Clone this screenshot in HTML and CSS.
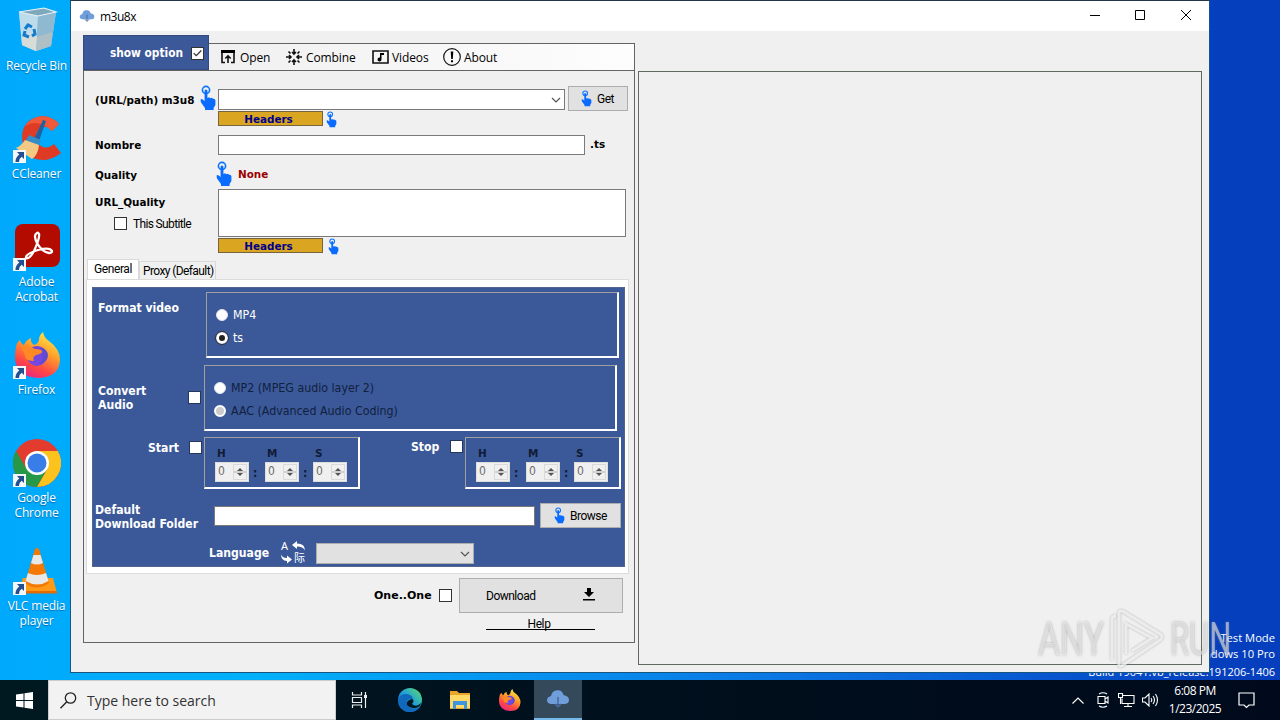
FILE: index.html
```
<!DOCTYPE html>
<html lang="en">
<head>
  <meta charset="UTF-8">
  <meta name="viewport" content="width=device-width, initial-scale=1.0">
  <title>m3u8x</title>
  <link rel="stylesheet" href="styles.css">
</head>
<body>
  <svg class="defs">
    <linearGradient id="fire" x1="0.8" y1="0" x2="0.3" y2="1">
      <stop offset="0" stop-color="#fff04a"/><stop offset="0.4" stop-color="#ffa02b"/><stop offset="0.75" stop-color="#ff4545"/><stop offset="1" stop-color="#e52786"/>
    </linearGradient>
    <linearGradient id="sea" x1="0" y1="1" x2="1" y2="0">
      <stop offset="0" stop-color="#0b61b8"/><stop offset="0.5" stop-color="#1e9fdb"/><stop offset="1" stop-color="#61de62"/>
    </linearGradient>
    <symbol id="hand" viewBox="0 0 16 26">
      <circle cx="6" cy="5" r="3.6" fill="none" stroke="#0a74ff" stroke-width="1.6"/>
      <path d="M4.6 5.5q1.4-2 2.8 0V13l1.6-.7 1.4 1 1.5-.5 1.2 1 1.6.2.7 1.2V20l-1.8 3v2H5v-2L1 17.5.5 14.5 2 14l2.6 2z" fill="#0a6cff"/>
    </symbol>
    <symbol id="cloud" viewBox="0 0 24 20">
      <path d="M5 15Q1 14.500 1 11 1 8 5 7 6 2 10 1.500 16 0 17.500 6 23 7 23 11 23 15 18 15z" fill="#6f9edb"/>
      <path d="M12 8v9M9 15l3 3 3-3" fill="none" stroke="#47699c" stroke-width="1.500"/>
    </symbol>
    <symbol id="firefox" viewBox="0 0 48 48">
      <path d="M3 17Q3 12 7 9q1 4 4 5 2-5 7-7-1 4 3 7 4-1 5-5 0-5 4-8 1 6 6 9 11 8 11 19-1 17-21 18Q3 46 2 27 2 20 3 17z" fill="url(#fire)"/>
      <circle cx="24" cy="25" r="10" fill="#7447df"/>
      <path d="M8 17q7-4 14 1 5 0 8 2-2 3-7 4-4 2-2 6-5 0-8-2-1-6-5-11z" fill="#ff8a25"/>
      <path d="M27 16q8 2 8 9-1 6-8 8 6-7 0-17z" fill="#5d4bd1"/>
    </symbol>
    <symbol id="shortcut" viewBox="0 0 13 13">
      <path d="M0 0h13v13H0z" fill="#f4f8fb"/>
      <path d="M4 2h7v7L8.700 6.800Q6 8.500 6 12H2.500Q2.500 7 6.300 4.500z" fill="#234f8f"/>
    </symbol>
    <symbol id="chev" viewBox="0 0 10 6"><path d="M1 1l4 4 4-4" fill="none" stroke="#555" stroke-width="1.200"/></symbol>
  </svg>

  <div class="desktop">
    <div class="shortcuts">
      <div class="shortcut">
        <svg class="pic" viewBox="0 0 48 48">
          <path d="M6 5l25-4 12 4-5 34-15 5-14-6z" fill="#a9cfe4"/>
          <path d="M6 5l19 4-2 35-14-6z" fill="#bcdcec"/><path d="M25 9l18-4-5 34-15 5z" fill="#8fb9d1"/>
          <path d="M9 29l7-3 8 4-1 14-14-6z" fill="#d8dcd9"/><path d="M24 30l15-5-1 14-15 5z" fill="#aebfc6"/>
          <path d="M6 5l25-4 12 4-18 4z" fill="#7fa9bb" stroke="#e5f2f7" stroke-width="1.200"/>
          <path d="M12 22l3-4 4 2M21 22l1 5-3 2M16 30l-5-2 1-4" fill="none" stroke="#147bcd" stroke-width="3"/>
        </svg>
        <span>Recycle Bin</span>
      </div>
      <div class="shortcut">
        <svg class="pic" viewBox="0 0 48 48">
          <path d="M46 9Q37-1 24 2 10 6 9 21q0 15 11 22 14 6 28-5l-7-9q-7 6-13 2-6-4-5-11 2-9 11-8 3 1 5 4z" fill="#df3a24"/>
          <path d="M46 9Q37-1 24 2q-8 3-12 9 12-8 27 5z" fill="#f05a3a"/>
          <path d="M30 5l3 1-7 20-5-2z" fill="#245f9e"/><path d="M16 20l12 5-2 6-14-4z" fill="#348cc9"/>
          <path d="M12 25l14 5q-1 10-7 14L3 33q6-3 9-8z" fill="#f3c983"/>
        </svg>
        <svg class="arrow"><use href="#shortcut"/></svg>
        <span>CCleaner</span>
      </div>
      <div class="shortcut">
        <svg class="pic" viewBox="0 0 48 48">
          <rect x="2" y="1" width="45" height="43" rx="8" fill="#b30b00"/>
          <path d="M24 10q-4 2 0 10 5 9 12 10 3 0 3-2-2-4-14-1-13 4-12 8 3 2 8-7 6-13 5-17-1-2-2-1z" fill="none" stroke="#fff" stroke-width="2.300"/>
        </svg>
        <svg class="arrow"><use href="#shortcut"/></svg>
        <span>Adobe<br>Acrobat</span>
      </div>
      <div class="shortcut">
        <svg class="pic"><use href="#firefox"/></svg>
        <svg class="arrow"><use href="#shortcut"/></svg>
        <span>Firefox</span>
      </div>
      <div class="shortcut">
        <svg class="pic" viewBox="0 0 48 48">
          <circle cx="24" cy="24" r="24" fill="#e33b2e"/>
          <path d="M3.200 12A24 24 0 0 0 24 48l10.500-18L24 24 13.600 30z" fill="#279847"/>
          <path d="M44.800 12A24 24 0 0 1 24 48l10.400-18L24 12z" fill="#fcc31e"/>
          <circle cx="24" cy="24" r="12" fill="#fff"/><circle cx="24" cy="24" r="9.500" fill="#397ee8"/>
        </svg>
        <svg class="arrow"><use href="#shortcut"/></svg>
        <span>Google<br>Chrome</span>
      </div>
      <div class="shortcut">
        <svg class="pic" viewBox="0 0 48 48">
          <path d="M10 31h30l4 15H5z" fill="#ff9a16"/><path d="M5 44h39v2.500H5z" fill="#e56b00"/>
          <path d="M22 2q2-2 4 0l10 34q-12 9-24 0z" fill="#f57900"/>
          <path d="M20.500 8h7l2.500 8q-6 3-12 0zM15 26q9 4 18 0l2.500 8q-11 7-23 0z" fill="#e8e8e8"/>
        </svg>
        <svg class="arrow"><use href="#shortcut"/></svg>
        <span>VLC media<br>player</span>
      </div>
    </div>

    <div class="build-info">Test Mode<br>Windows 10 Pro<div class="build-no">Build 19041.vb_release.191206-1406</div></div>

    <div class="window">
      <div class="titlebar">
        <svg class="app-icon"><use href="#cloud"/></svg>
        <span class="app-name">m3u8x</span>
        <svg class="controls" viewBox="0 0 104 12">
          <path d="M1 6.500h10M46.500 1.500h9v9h-9zM92 1l10 10M102 1L92 11" fill="none" stroke="#000"/>
        </svg>
      </div>

      <div class="client">
        <div class="left">
          <div class="header">
            <div class="show-option"><span class="lbl">show option</span>
              <svg class="check" viewBox="0 0 13 13"><path d="M2 6l3 3 6-6" fill="none" stroke="#333" stroke-width="1.500"/></svg>
            </div>
            <div class="menu">
              <svg class="mi-open" viewBox="0 0 14 14"><path d="M4 12.500H1V1h12v11.500h-3M7 13V6M4.300 8.500L7 5.800l2.700 2.700" fill="none" stroke="#111" stroke-width="1.600"/><path d="M0 0h14v3H0z"/></svg>
              <span class="m-open">Open</span>
              <svg class="mi-combine" viewBox="0 0 16 16"><path d="M8 0v5M6 3l2 2 2-2M8 16v-5M6 13l2-2 2 2M0 8h5M3 6l2 2-2 2M16 8h-5M13 6l-2 2 2 2M2.500 2.500L4.500 4.500M13.500 2.500l-2 2M2.500 13.500l2-2M13.500 13.500l-2-2" fill="none" stroke="#111" stroke-width="1.600"/></svg>
              <span class="m-combine">Combine</span>
              <svg class="mi-videos" viewBox="0 0 17 14"><path d="M1 1h15v12H1z" fill="none" stroke="#111" stroke-width="1.600"/><path d="M8 3h4v2H9.500v4.500a2 2 0 1 1-1.500-2z"/></svg>
              <span class="m-videos">Videos</span>
              <svg class="mi-about" viewBox="0 0 18 18"><circle cx="9" cy="9" r="8.300" fill="none" stroke="#111" stroke-width="1.200"/><path d="M7.700 3.500h2.600L9.800 11H8.200zM8 12.300h2v2H8z"/></svg>
              <span class="m-about">About</span>
            </div>
          </div>

          <div class="panel">
            <div class="row row-url">
              <span class="bold label w-url">(URL/path) m3u8</span>
              <svg class="hand"><use href="#hand"/></svg>
              <div class="combo"><svg class="chev"><use href="#chev"/></svg></div>
              <div class="button get"><svg class="hand-sm"><use href="#hand"/></svg><span>Get</span></div>
            </div>
            <div class="row row-headers"><div class="headers bold">Headers</div><svg class="hand-sm"><use href="#hand"/></svg></div>
            <div class="row row-name"><span class="bold label">Nombre</span><div class="input"></div><span class="bold ext">.ts</span></div>
            <div class="row row-quality"><span class="bold label">Quality</span><svg class="hand"><use href="#hand"/></svg><span class="bold none">None</span></div>
            <div class="row row-area">
              <div class="label area-label">
                <span class="bold">URL_Quality</span>
                <div class="subtitle"><i class="check"></i><span class="ui">This Subtitle</span></div>
              </div>
              <div class="textarea"></div>
            </div>
            <div class="row row-headers second"><div class="headers bold">Headers</div><svg class="hand-sm"><use href="#hand"/></svg></div>

            <div class="tabs"><div class="tab active">General</div><div class="tab">Proxy (Default)</div></div>
            <div class="tab-page">
              <div class="options">
                <div class="opt-row format">
                  <span class="lbl">Format video</span>
                  <div class="group"><div class="radio"><i></i>MP4</div><div class="radio on"><i></i>ts</div></div>
                </div>
                <div class="opt-row convert">
                  <span class="lbl">Convert<br>Audio</span><i class="check"></i>
                  <div class="group disabled"><div class="radio"><i></i>MP2 (MPEG audio layer 2)</div><div class="radio off"><i></i>AAC (Advanced Audio Coding)</div></div>
                </div>
                <div class="opt-row times">
                  <span class="lbl start">Start</span><i class="check"></i>
                  <div class="time-group">
                    <div class="unit"><b>H</b><div class="spin">0<em></em></div></div><b class="colon">:</b>
                    <div class="unit"><b>M</b><div class="spin">0<em></em></div></div><b class="colon">:</b>
                    <div class="unit"><b>S</b><div class="spin">0<em></em></div></div>
                  </div>
                  <span class="lbl stop">Stop</span><i class="check stop-check"></i>
                  <div class="time-group">
                    <div class="unit"><b>H</b><div class="spin">0<em></em></div></div><b class="colon">:</b>
                    <div class="unit"><b>M</b><div class="spin">0<em></em></div></div><b class="colon">:</b>
                    <div class="unit"><b>S</b><div class="spin">0<em></em></div></div>
                  </div>
                </div>
                <div class="opt-row folder">
                  <span class="lbl">Default<br>Download Folder</span>
                  <div class="folder-input"></div>
                  <div class="button browse"><svg class="hand-sm"><use href="#hand"/></svg><span>Browse</span></div>
                </div>
                <div class="opt-row language">
                  <span class="lbl">Language</span>
                  <svg class="translate" viewBox="0 0 26 23">
                    <text x="1" y="9" font-size="11">A</text><text x="14" y="21" font-size="11">际</text>
                    <path d="M12 4l5-4v2.500q8 0 8 7-2-4-8-4V8zM1 13q1 4 6 4v-2.500l5 4-5 4V20q-6 0-6-7z"/>
                  </svg>
                  <div class="select"><svg class="chev"><use href="#chev"/></svg></div>
                </div>
              </div>
            </div>

            <div class="row row-download">
              <span class="bold one">One..One</span><i class="check"></i>
              <div class="button download"><span>Download</span>
                <svg viewBox="0 0 12 13"><path d="M4 0h4v4h3L6 9 1 4h3zM0 11h12v1.500H0z"/></svg>
              </div>
            </div>
            <div class="help">Help</div>
          </div>
        </div>
        <div class="right"></div>
      </div>
    </div>
  </div>

  <div class="taskbar">
    <div class="start-btn"><svg viewBox="0 0 17 17"><path d="M0 2.500L7.500 1.400V8H0zM8.500 1.200L17 0v8H8.500zM0 9h7.500v6.600L0 14.500zM8.500 9H17v8l-8.500-1.200z" fill="#fff"/></svg></div>
    <div class="search">
      <svg viewBox="0 0 17 17"><circle cx="10.500" cy="6" r="5.200" fill="none" stroke="#222" stroke-width="1.300"/><path d="M6.800 9.800L.5 16.200" stroke="#222" stroke-width="1.400"/></svg>
      <span>Type here to search</span>
    </div>
    <div class="task"><svg class="taskview" viewBox="0 0 18 18"><path d="M1.500 1v3h9V1M1.500 17v-3h9v3M1.500 6.500h9v5h-9zM14.500 1v16" fill="none" stroke="#eee" stroke-width="1.200"/><path d="M13 4h3v3h-3z" fill="#eee"/></svg></div>
    <div class="task edge"><svg width="24" height="24" viewBox="0 0 24 24"><circle cx="12" cy="12" r="12" fill="url(#sea)"/><path d="M0 12Q2 5 9 6q6 1 6 6-4-3-6 1-1 6 6 8 4 0 7-3-4 7-12 6Q0 22 0 12z" fill="#1169bd"/><path d="M14 11q3 2 0 5 4 4 9-1l-1 3q-8 5-13-1-1-5 5-6z" fill="#001820"/></svg></div>
    <div class="task"><svg width="20" height="20" viewBox="0 0 20 20"><path d="M0 1h7l2 2h11v16H0z" fill="#e7a52c"/><path d="M0 5h20v13H0z" fill="#ffd968"/><path d="M3 11h14v8h-3v-4H6v4H3z" fill="#3b96dd"/></svg></div>
    <div class="task fox"><svg width="23" height="24"><use href="#firefox"/></svg></div>
    <div class="task current"><svg width="24" height="20"><use href="#cloud"/></svg></div>
    <div class="tray">
      <svg class="up" viewBox="0 0 12 7"><path d="M.5 6.500L6 1l5.500 5.500" fill="none" stroke="#fff" stroke-width="1.200"/></svg>
      <svg class="cam" viewBox="0 0 12 16"><path d="M1 4.500h7v7H1zM8 7l3-2v6L8 9M2 2q4-2.500 8 0M2 14q4 2.500 8 0" fill="none" stroke="#fff" stroke-width="1.100"/></svg>
      <svg class="net" viewBox="0 0 17 15"><path d="M5 2.500h11v8H4v-5M10 10.500v3M6 13.500h8M.5.500h4v4h-4zM2.500 4v7" fill="none" stroke="#fff" stroke-width="1.100"/></svg>
      <svg class="vol" viewBox="0 0 17 14"><path d="M.5 5H3l4-4v12L3 9H.5zM9 5q1.500 2 0 4M11 3q3 4 0 8M13.500 1q4 6 0 12" fill="none" stroke="#fff" stroke-width="1.100"/></svg>
      <div class="clock">6:08 PM<br>1/23/2025</div>
      <svg class="note" viewBox="0 0 17 17"><path d="M1 1h15v12h-5l-2.500 2.500L6 13H1z" fill="none" stroke="#fff" stroke-width="1.200"/></svg>
    </div>
  </div>

  <div class="watermark">
    <span class="any">ANY</span>
    <svg viewBox="0 0 58 62"><path d="M4 52V12q0-4 4-4M11 58V6q0-5 5-2l36 22q4 3 0 6L15 57q-4 3-4-2M18 46V16l26 14-20 13" fill="none"/></svg>
    <span class="run">RUN</span>
  </div>
</body>
</html>
```
FILE: styles.css
```
* {
  box-sizing: border-box;
}
body {
  margin: 0;
  width: 1280px;
  height: 720px;
  overflow: hidden;
  position: relative;
  font-family: 'Roboto', sans-serif;
  font-size: 12px;
  color: #000;
}
svg {
  display: block;
  flex: none;
}
.defs {
  position: absolute;
  width: 0;
  height: 0;
}
.desktop {
  position: relative;
  height: 680px;
  background: linear-gradient(to right, #00a9fc 0, #00b0fa 20%, #0b78e4 60%, #0651cc 85%, #053fbe 95%);
}
.shortcuts {
  width: 73px;
  padding-top: 7px;
}
.shortcut {
  position: relative;
  height: 108px;
  text-align: center;
  color: #fff;
  font-family: 'Open Sans', sans-serif;
  font-size: 12px;
  letter-spacing: -0.15px;
  line-height: 15px;
  white-space: nowrap;
  text-shadow: 0 1px 1px rgba(0, 40, 90, 0.5);
}
.shortcut .pic {
  width: 48px;
  height: 48px;
  margin: 0 auto 3px;
}
.shortcut span {
  display: block;
}
.arrow {
  position: absolute;
  left: 13px;
  top: 35px;
  width: 13px;
  height: 13px;
}
.build-info {
  position: absolute;
  right: 5px;
  top: 630px;
  color: #fff;
  text-align: right;
  font-family: 'Open Sans', sans-serif;
  font-size: 11.2px;
  line-height: 16px;
}
.build-no {
  margin-top: 2px;
  font-size: 11px;
}

/* application window */
.window {
  position: absolute;
  left: 70px;
  top: 0;
  width: 1140px;
  height: 673px;
  border: 1px solid #1a5580;
  border-top-color: #24364c;
  background: #f0f0f0;
}
.titlebar {
  height: 30px;
  background: #fff;
  display: flex;
  align-items: center;
}
.app-icon {
  width: 16px;
  height: 14px;
  margin-left: 8px;
}
.app-name {
  margin-left: 5px;
  font-family: 'Open Sans', sans-serif;
  font-size: 12px;
  letter-spacing: -0.5px;
}
.controls {
  width: 104px;
  height: 12px;
  margin: -2px 16px 0 auto;
}
.client {
  display: flex;
  gap: 3px;
  padding: 4px 0 0 12px;
}
.left {
  width: 552px;
}
.right {
  width: 564px;
  height: 594px;
  margin-top: 36px;
  border: 1px solid #5f6a60;
}
.header {
  display: flex;
  align-items: flex-end;
  height: 35px;
}
.show-option {
  width: 126px;
  height: 35px;
  background: #3b5998;
  border: 1px solid #34497d;
  display: flex;
  align-items: center;
  justify-content: flex-end;
  gap: 8px;
  padding: 1px 4px 0 0;
}
.show-option .lbl {
  font-size: 11.8px;
}
.bold {
  font-family: 'DejaVu Sans', sans-serif;
  font-weight: bold;
  font-size: 10.4px;
  line-height: 13px;
  white-space: nowrap;
}
.check {
  display: block;
  flex: none;
  width: 13px;
  height: 13px;
  background: #fff;
  border: 1px solid #333;
}
.menu {
  width: 426px;
  height: 27px;
  border: 1px solid #646464;
  border-bottom: 0;
  border-left: 0;
  background: linear-gradient(to right, #f0f0f0, #fdfdfd);
  display: flex;
  align-items: center;
  font-family: 'Open Sans', sans-serif;
  letter-spacing: -0.1px;
}
.mi-open {
  width: 14px;
  height: 14px;
  margin-left: 12px;
}
.m-open {
  width: 46px;
  margin-left: 5px;
}
.mi-combine {
  width: 16px;
  height: 16px;
}
.m-combine {
  width: 66px;
  margin-left: 4px;
}
.mi-videos {
  width: 17px;
  height: 14px;
}
.m-videos {
  width: 51px;
  margin-left: 3px;
}
.mi-about {
  width: 18px;
  height: 18px;
}
.m-about {
  margin-left: 3px;
}
.panel {
  height: 573px;
  border: 1px solid #646464;
  padding-top: 14px;
}
.row {
  display: flex;
}
.label {
  width: 134px;
  padding-left: 11px;
  flex: none;
}
.row-url {
  height: 26px;
  align-items: center;
}
.label.w-url {
  width: 116px;
  padding-top: 4px;
}
.hand {
  width: 16px;
  height: 26px;
}
.hand-sm {
  width: 11px;
  height: 17px;
}
.combo {
  width: 347px;
  height: 21px;
  margin: 3px 3px 0 2px;
  border: 1px solid #7a7a7a;
  background: #fff;
  display: flex;
  align-items: center;
  justify-content: flex-end;
  padding-right: 3px;
}
.chev {
  width: 10px;
  height: 6px;
}
.button {
  display: flex;
  align-items: center;
  background: #e1e1e1;
  border: 1px solid #adadad;
  letter-spacing: -0.5px;
}
.get {
  width: 60px;
  height: 25px;
  padding: 1px 0 0 12px;
  gap: 5px;
}
.row-headers {
  height: 16px;
  padding-left: 134px;
}
.headers {
  width: 105px;
  height: 15px;
  margin-right: 3px;
  border: 1px solid #766440;
  background: #daa520;
  color: #00008b;
  text-align: center;
  line-height: 14px;
  padding-right: 4px;
}
.row-name {
  height: 20px;
  margin-top: 8px;
}
.row-name .label {
  padding-top: 4px;
}
.input {
  width: 367px;
  height: 20px;
  border: 1px solid #7a7a7a;
  background: #fff;
}
.ext {
  margin: 3px 0 0 5px;
}
.row-quality {
  height: 34px;
  padding-top: 6px;
}
.row-quality .label {
  width: 132px;
  padding-top: 8px;
}
.none {
  color: #9b0000;
  margin: 7px 0 0 6px;
}
.row-area {
  height: 49px;
}
.area-label {
  padding-top: 7px;
}
.area-label .bold {
  display: block;
}
.textarea {
  width: 408px;
  height: 48px;
  border: 1px solid #7a7a7a;
  background: #fff;
}
.subtitle {
  display: flex;
  align-items: center;
  gap: 6px;
  margin: 8px 0 0 19px;
  height: 13px;
}
.ui {
  letter-spacing: -0.65px;
  white-space: nowrap;
}
.second .headers {
  margin-right: 5px;
}
.tabs {
  display: flex;
  align-items: flex-end;
  height: 20px;
  margin: 5px 0 0 3px;
  white-space: nowrap;
  letter-spacing: -0.6px;
}
.tab {
  width: 77px;
  height: 18px;
  border: 1px solid #d9d9d9;
  border-bottom: 0;
  line-height: 18px;
  padding-left: 3px;
}
.tab.active {
  width: 52px;
  height: 20px;
  padding-left: 6px;
  background: #fff;
  letter-spacing: -0.4px;
}
.tab-page {
  width: 543px;
  height: 295px;
  margin-left: 2px;
  padding: 7px 0 0 5px;
  border: 1px solid #dcdcdc;
  background: #fff;
}
.options {
  width: 533px;
  height: 280px;
  border: 1px solid #54648c;
  background: #3b5998;
  padding-top: 4px;
}
.opt-row {
  display: flex;
}
.lbl {
  flex: none;
  font-family: 'DejaVu Sans Condensed', 'DejaVu Sans', sans-serif;
  font-stretch: condensed;
  font-weight: bold;
  font-size: 12.1px;
  line-height: 14px;
  color: #fff;
  white-space: nowrap;
}
.options .check {
  border-color: #26375e;
}
.group {
  width: 413px;
  height: 66px;
  border: 2px solid #fff;
  border-top: 1px solid #a0a0a0;
  border-left: 1px solid #a0a0a0;
  color: #fff;
  padding: 10px 0 0 9px;
  font-family: 'DejaVu Sans Condensed', 'DejaVu Sans', sans-serif;
  font-stretch: condensed;
  font-size: 12.3px;
}
.radio {
  height: 23px;
  display: flex;
  align-items: center;
  gap: 5px;
}
.radio i {
  width: 12px;
  height: 12px;
  border-radius: 50%;
  background: #fff;
  border: 1px solid #dde2ee;
}
.radio.on i {
  background: #222;
  border: 3px solid #fff;
  outline: 1px solid #333;
}
.radio.off i {
  background: #ccc;
  border: 2px solid #fff;
}
.disabled {
  color: #10203f;
}
.format {
  height: 73px;
}
.format .lbl {
  width: 113px;
  padding: 9px 0 0 5px;
}
.convert {
  height: 72px;
}
.convert .lbl {
  width: 95px;
  padding: 19px 0 0 5px;
}
.convert .check {
  margin: 26px 3px 0 0;
}
.times {
  height: 66px;
}
.start {
  width: 96px;
  padding: 4px 0 0 55px;
}
.times .check {
  margin: 4px 2px 0 0;
}
.stop {
  width: 90px;
  padding: 3px 0 0 51px;
}
.times .stop-check {
  margin-top: 3px;
}
.time-group {
  width: 156px;
  height: 52px;
  border: 2px solid #fff;
  border-top: 1px solid #a0a0a0;
  border-left: 1px solid #a0a0a0;
  display: flex;
  padding: 8px 0 0 10px;
  color: #101b36;
  font-family: 'DejaVu Sans Condensed', 'DejaVu Sans', sans-serif;
  font-stretch: condensed;
}
.unit b {
  display: block;
  height: 16px;
  padding-left: 2px;
  font-family: 'DejaVu Sans', sans-serif;
  font-stretch: normal;
  font-size: 10.4px;
  line-height: 15px;
}
.colon {
  width: 16px;
  padding: 20px 0 0 4px;
  font-size: 12px;
}
.spin {
  width: 34px;
  height: 20px;
  background: #f0f0f0;
  border: 1px solid #ddd;
  color: #6d6d6d;
  padding-left: 2px;
  line-height: 17px;
  display: flex;
}
.spin em {
  width: 14px;
  height: 16px;
  margin: 1px 1px 0 auto;
  display: flex;
  flex-direction: column;
  align-items: center;
  justify-content: space-between;
  padding: 3px 0;
  border: 1px solid #dadada;
  background: linear-gradient(#f0f0f0 46%, #d0d0d0 46%, #d0d0d0 54%, #f0f0f0 54%);
}
.spin em::before,
.spin em::after {
  content: '';
  border: 3px solid transparent;
}
.spin em::before {
  border-top: 0;
  border-bottom-color: #555;
}
.spin em::after {
  border-bottom: 0;
  border-top-color: #555;
}
.colon + .unit + .colon {
  width: 14px;
}
.folder {
  height: 40px;
}
.folder .lbl {
  width: 121px;
  padding-left: 2px;
}
.folder-input {
  width: 321px;
  height: 20px;
  margin-top: 3px;
  border: 1px solid #7a7a7a;
  background: #fff;
}
.browse {
  width: 81px;
  height: 25px;
  margin-left: 5px;
  padding-left: 13px;
  gap: 5px;
}
.language {
  padding-left: 116px;
}
.language .lbl {
  width: 71px;
  padding-top: 3px;
}
.translate {
  width: 26px;
  height: 23px;
  margin-top: -2px;
  overflow: visible;
  fill: #fff;
  font-family: 'Noto Sans', 'Noto Sans CJK SC', sans-serif;
}
.select {
  width: 158px;
  height: 21px;
  margin-left: 10px;
  border: 1px solid #adadad;
  background: #e1e1e1;
  display: flex;
  align-items: center;
  justify-content: flex-end;
  padding-right: 3px;
}
.row-download {
  height: 35px;
  margin-top: 4px;
  align-items: center;
}
.one {
  width: 355px;
  padding-left: 290px;
  font-size: 11px;
}
.download {
  width: 164px;
  height: 35px;
  margin-left: 7px;
  padding: 0 27px 0 26px;
  justify-content: space-between;
}
.download svg {
  width: 12px;
  height: 13px;
  margin-top: -2px;
}
.help {
  width: 109px;
  height: 13px;
  margin: 4px 0 0 402px;
  padding-right: 3px;
  border-bottom: 1px solid #000;
  text-align: center;
  line-height: 14px;
  letter-spacing: -0.4px;
}

/* taskbar */
.taskbar {
  height: 40px;
  display: flex;
  background: linear-gradient(to right, #001820, #000e1c 60%, #000a1c);
}
.start-btn {
  width: 48px;
  display: flex;
  align-items: center;
  justify-content: center;
}
.start-btn svg {
  width: 17px;
  height: 17px;
}
.search {
  width: 288px;
  height: 40px;
  background: #f2f2f2;
  border: 1px solid #ccc;
  display: flex;
  align-items: center;
  padding-left: 11px;
  gap: 10px;
  font-family: 'Open Sans', sans-serif;
  font-size: 14px;
  color: #333;
}
.search svg {
  width: 17px;
  height: 17px;
}
.task {
  width: 48px;
  display: flex;
  align-items: center;
  justify-content: center;
}
.taskview {
  width: 18px;
  height: 18px;
}
.task.edge {
  width: 52px;
}
.task.fox {
  width: 50px;
}
.task.current {
  background: #34495a;
  border-bottom: 2px solid #76b9ed;
}
.tray {
  margin-left: auto;
  display: flex;
  align-items: center;
  color: #fff;
}
.up {
  width: 12px;
  height: 7px;
}
.cam {
  width: 12px;
  height: 16px;
  margin-left: 13px;
}
.net {
  width: 17px;
  height: 15px;
  margin-left: 9px;
}
.vol {
  width: 17px;
  height: 14px;
  margin-left: 7px;
}
.clock {
  width: 70px;
  margin-left: 1px;
  text-align: center;
  font-family: 'Open Sans', sans-serif;
  font-size: 12px;
  line-height: 18px;
  letter-spacing: -0.5px;
}
.note {
  width: 17px;
  height: 17px;
  margin: 0 25px 0 8px;
}

.watermark {
  position: absolute;
  left: 1038px;
  top: 608px;
  width: 196px;
  height: 62px;
  display: flex;
  align-items: center;
  color: rgba(255, 255, 255, 0.5);
  font-family: 'Roboto', sans-serif;
  font-size: 47px;
  line-height: 62px;
  text-shadow: 0 0 3px rgba(120, 120, 120, 0.6);
}
.watermark span {
  flex: none;
  width: 66px;
  transform: scaleX(0.72);
  transform-origin: left center;
}
.watermark .run {
  transform: scaleX(0.66);
}
.watermark svg {
  width: 58px;
  height: 62px;
  margin: 0 4px 0 4px;
  stroke: rgba(255, 255, 255, 0.7);
  stroke-width: 3;
  filter: drop-shadow(0 0 1px rgba(110, 110, 110, 0.7));
}
```
